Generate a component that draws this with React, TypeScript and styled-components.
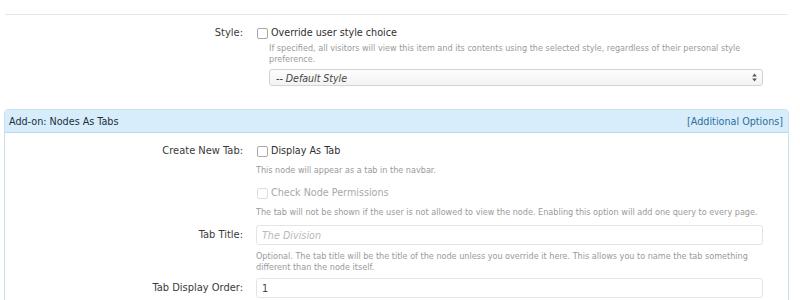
import React from 'react';
import styled, { createGlobalStyle } from 'styled-components';

const GlobalStyle = createGlobalStyle`
  html, body {
    margin: 0;
    padding: 0;
    background: #ffffff;
  }
  body {
    font-family: "DejaVu Sans Condensed", "DejaVu Sans", sans-serif;
    color: #333333;
  }
`;

const Page = styled.div`
  width: 800px;
  height: 300px;
  overflow: hidden;
  box-sizing: border-box;
  padding: 14px 11px 0 4px;
`;

const TopRule = styled.div`
  height: 1px;
  margin: 0 1px;
  background: #e4e7ee;
`;

const Row = styled.div<{ $labelWidth: number; $top?: number }>`
  display: grid;
  grid-template-columns: ${(p) => p.$labelWidth}px 507px;
  column-gap: 13px;
  margin-top: ${(p) => p.$top ?? 0}px;
  align-items: start;
`;

const Label = styled.div<{ $lh?: number }>`
  text-align: right;
  font-size: 11px;
  line-height: ${(p) => p.$lh ?? 14}px;
  color: #3a3a3a;
  white-space: nowrap;
`;

const Field = styled.div`
  display: flex;
  flex-direction: column;
`;

const CheckLine = styled.label<{ $disabled?: boolean }>`
  display: flex;
  align-items: center;
  gap: 3px;
  font-size: 10.7px;
  line-height: 14px;
  color: ${(p) => (p.$disabled ? '#a9a9a9' : '#2f2f2f')};
`;

const Box = styled.span<{ $disabled?: boolean }>`
  width: 9px;
  height: 9px;
  border: 1px solid ${(p) => (p.$disabled ? '#dddddd' : '#a8a8a8')};
  border-radius: 2px;
  background: #ffffff;
  flex: none;
  margin-left: 1px;
`;

const Hint = styled.div<{ $indent?: number; $top?: number }>`
  font-size: 9px;
  line-height: 11px;
  color: #9a9a9a;
  white-space: nowrap;
  padding-left: ${(p) => p.$indent ?? 0}px;
  margin-top: ${(p) => p.$top ?? 0}px;
`;

const Select = styled.div`
  margin: 4px 0 0 13px;
  height: 17px;
  box-sizing: border-box;
  border: 1px solid #d4d4d4;
  border-radius: 3px;
  background: linear-gradient(#fdfdfd, #f3f3f3);
  display: flex;
  align-items: center;
  justify-content: space-between;
  padding: 0 5px 0 6px;
  font-size: 10.5px;
  font-style: italic;
  color: #444444;
`;

const Arrows = styled.svg`
  width: 5px;
  height: 9px;
  flex: none;
`;

const Panel = styled.div`
  margin-top: 23px;
  border: 1px solid #c9e0ef;
  border-radius: 4px 4px 0 0;
  height: 200px;
`;

const PanelHeader = styled.div`
  height: 22px;
  background: #d7edfb;
  border-bottom: 1px solid #b9d8ec;
  border-radius: 3px 3px 0 0;
  display: flex;
  align-items: center;
  justify-content: space-between;
  padding: 0 5px 0 4px;
  font-size: 10.7px;
  color: #22303a;
`;

const HeaderLink = styled.a`
  color: #2f6d99;
  text-decoration: none;
`;

const PanelBody = styled.div`
  padding-top: 11px;
`;

const TextInput = styled.div<{ $placeholder?: boolean }>`
  height: 20px;
  box-sizing: border-box;
  border: 1px solid #e4e4e4;
  border-radius: 3px;
  display: flex;
  align-items: center;
  padding-left: 5px;
  font-size: 10.7px;
  font-style: ${(p) => (p.$placeholder ? 'italic' : 'normal')};
  color: ${(p) => (p.$placeholder ? '#b9b9b9' : '#444444')};
`;

const Checkbox = ({ disabled, children }: { disabled?: boolean; children: React.ReactNode }) => (
  <CheckLine $disabled={disabled}>
    <Box $disabled={disabled} />
    {children}
  </CheckLine>
);

export default function App() {
  return (
    <>
      <GlobalStyle />
      <Page>
        <TopRule />

        <Row $labelWidth={239} $top={11}>
          <Label>Style:</Label>
          <Field>
            <Checkbox>Override user style choice</Checkbox>
            <Hint $indent={13} $top={3}>
              If specified, all visitors will view this item and its contents using the selected style, regardless of their personal style
              <br />
              preference.
            </Hint>
            <Select>
              <span>-- Default Style</span>
              <Arrows viewBox="0 0 5 9">
                <path d="M2.5 0.5 L4.8 3.6 H0.2 Z M2.5 8.5 L4.8 5.4 H0.2 Z" fill="#555555" />
              </Arrows>
            </Select>
          </Field>
        </Row>

        <Panel>
          <PanelHeader>
            <span>Add-on: Nodes As Tabs</span>
            <HeaderLink href="#">[Additional Options]</HeaderLink>
          </PanelHeader>
          <PanelBody>
            <Row $labelWidth={238}>
              <Label>Create New Tab:</Label>
              <Field>
                <Checkbox>Display As Tab</Checkbox>
                <Hint $top={7}>This node will appear as a tab in the navbar.</Hint>
                <Hint $top={10}>
                  <Checkbox disabled>Check Node Permissions</Checkbox>
                </Hint>
                <Hint $top={7}>
                  The tab will not be shown if the user is not allowed to view the node. Enabling this option will add one query to every page.
                </Hint>
              </Field>
            </Row>

            <Row $labelWidth={238} $top={7}>
              <Label $lh={20}>Tab Title:</Label>
              <Field>
                <TextInput $placeholder>The Division</TextInput>
                <Hint $top={6}>
                  Optional. The tab title will be the title of the node unless you override it here. This allows you to name the tab something
                  <br />
                  different than the node itself.
                </Hint>
              </Field>
            </Row>

            <Row $labelWidth={238} $top={5}>
              <Label $lh={20}>Tab Display Order:</Label>
              <Field>
                <TextInput>1</TextInput>
              </Field>
            </Row>
          </PanelBody>
        </Panel>
      </Page>
    </>
  );
}
